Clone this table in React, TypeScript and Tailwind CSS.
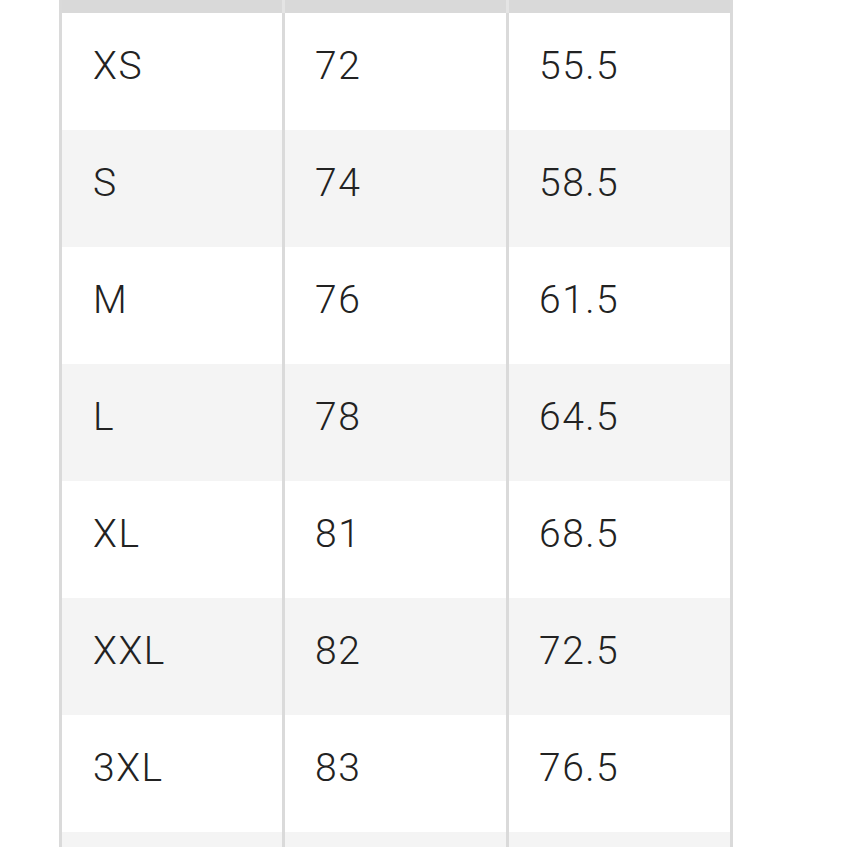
const rows = [
  ["XS", "72", "55.5"],
  ["S", "74", "58.5"],
  ["M", "76", "61.5"],
  ["L", "78", "64.5"],
  ["XL", "81", "68.5"],
  ["XXL", "82", "72.5"],
  ["3XL", "83", "76.5"],
]

export default function App() {
  return (
    <div className="w-[847px] h-[847px] overflow-hidden bg-white font-['Roboto','Liberation_Sans',Arial,sans-serif] font-light text-[#222222]">
      <div className="ml-[59px] w-[674px]">
        {/* header row, cut off at the top */}
        <div className="grid grid-cols-[220px_224px_224px] h-[13px] bg-[#d9d9d9] border-x-[3px] border-[#dadada]">
          <div />
          <div className="border-l-[3px] border-[#e4e4e4]" />
          <div className="border-l-[3px] border-[#e4e4e4]" />
        </div>

        {rows.map((row, i) => (
          <div
            key={row[0]}
            className={`grid grid-cols-[220px_224px_224px] h-[117px] border-x-[3px] border-[#dadada] ${
              i % 2 === 1 ? "bg-[#f4f4f4]" : "bg-white"
            }`}
          >
            <div className="pl-[31px] pt-[34px] text-[39px] leading-[39px] tracking-[1.5px]">{row[0]}</div>
            <div className="border-l-[3px] border-[#dadada] pl-[30px] pt-[34px] text-[39px] leading-[39px] tracking-[1.5px]">{row[1]}</div>
            <div className="border-l-[3px] border-[#dadada] pl-[30px] pt-[34px] text-[39px] leading-[39px] tracking-[1.5px]">{row[2]}</div>
          </div>
        ))}

        <div className="grid grid-cols-[220px_224px_224px] h-[117px] bg-[#f4f4f4] border-x-[3px] border-[#dadada]">
          <div />
          <div className="border-l-[3px] border-[#dadada]" />
          <div className="border-l-[3px] border-[#dadada]" />
        </div>
      </div>
    </div>
  )
}
